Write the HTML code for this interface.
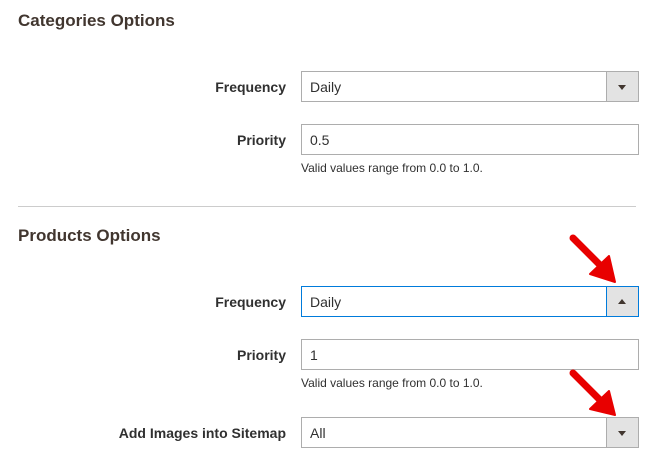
<!DOCTYPE html>
<html><head><style>
body{margin:0;width:650px;height:461px;background:#fff;font-family:"Liberation Sans",sans-serif;position:relative;overflow:hidden}
.h{position:absolute;left:18px;font-size:17px;font-weight:bold;color:#41362f}
.l{position:absolute;right:364px;font-size:14px;font-weight:bold;color:#303030;text-align:right}
.f{position:absolute;left:301px;width:336px;height:29px;border:1px solid #adadad;box-sizing:content-box;font-size:14px;color:#303030;line-height:31px;text-indent:8px}
.f.s:after{content:"";position:absolute;right:0;top:0;width:31px;height:29px;background:#e3e3e3;border-left:1px solid #adadad}
.f i{position:absolute;right:12px;top:13px;width:0;height:0;border-left:4px solid transparent;border-right:4px solid transparent;border-top:5px solid #41362f;z-index:2}
.f.o{border-color:#007bdb}
.f.o:after{border-left-color:#007bdb}
.f.o i{border-top:0;border-bottom:5px solid #41362f;top:12px}
.hint{position:absolute;left:301px;font-size:12px;color:#303030}
</style></head><body>
<div class="h" style="top:11px">Categories Options</div>
<div class="l" style="top:79px">Frequency</div>
<div class="f s" style="top:71px">Daily<i></i></div>
<div class="l" style="top:132px">Priority</div>
<div class="f" style="top:124px">0.5</div>
<div class="hint" style="top:161px">Valid values range from 0.0 to 1.0.</div>
<div style="position:absolute;left:18px;top:206px;width:618px;height:1px;background:#ccc"></div>
<div class="h" style="top:226px">Products Options</div>
<div class="l" style="top:294px">Frequency</div>
<div class="f s o" style="top:286px">Daily<i></i></div>
<div class="l" style="top:347px">Priority</div>
<div class="f" style="top:339px">1</div>
<div class="hint" style="top:376px">Valid values range from 0.0 to 1.0.</div>
<div class="l" style="top:425px">Add Images into Sitemap</div>
<div class="f s" style="top:417px">All<i></i></div>
<svg width="650" height="461" style="position:absolute;left:0;top:0;pointer-events:none">
<g fill="#e80000" stroke="#e80000" stroke-linecap="round">
<line x1="573" y1="238" x2="601" y2="266" stroke-width="7"/>
<polygon points="590,274 615,282 609,256" stroke-width="2" stroke-linejoin="round"/>
<line x1="573" y1="373" x2="601" y2="401" stroke-width="7"/>
<polygon points="590,409 615,415 609,391" stroke-width="2" stroke-linejoin="round"/>
</g>
</svg>
</body></html>
